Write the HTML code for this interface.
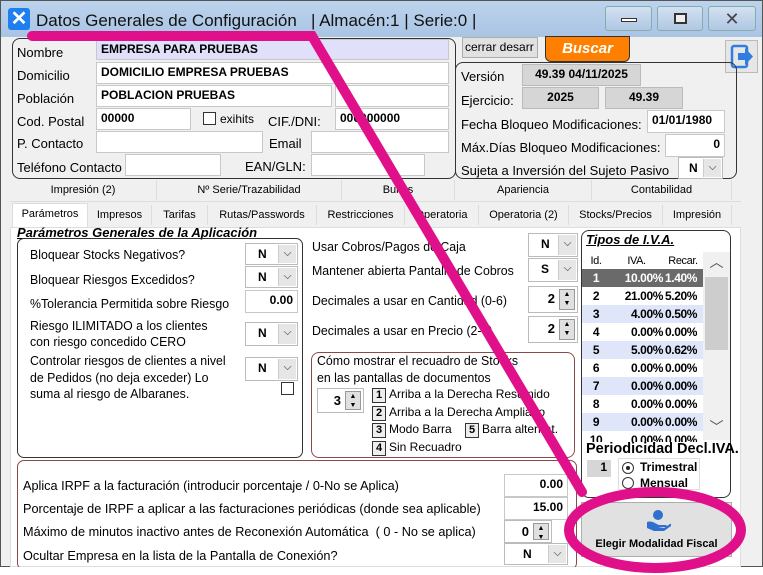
<!DOCTYPE html>
<html><head><meta charset="utf-8"><style>
*{box-sizing:border-box;margin:0;padding:0}
body{width:763px;height:575px;background:#fff;font-family:"Liberation Sans",sans-serif;font-size:13px;color:#000;position:relative;overflow:hidden}
.a{position:absolute;white-space:nowrap}
.n{transform:scaleX(.95);transform-origin:0 0}
.in{position:absolute;background:#fff;border:1px solid #c8c8c8;font-weight:bold;font-size:12px;padding:2px 4px;line-height:15px}
.gb{position:absolute;background:#d6d6d6;border:1px solid #bbb;font-weight:bold;font-size:12px;text-align:center;line-height:18px}
.cb{position:absolute;background:#fff;border:1px solid #bbb;font-weight:bold;font-size:12px}
.cb b{position:absolute;left:12px;top:3px}
.cb i{position:absolute;right:1px;top:1px;bottom:1px;width:18px;background:#e6e6e6;border-left:1px solid #ccc;font-style:normal;color:#777;font-size:10px;text-align:center;line-height:18px}
.sp{position:absolute;background:#fff;border:1px solid #bbb;font-weight:bold;font-size:13px}
.sp b{position:absolute;right:22px;top:4px}
.sp i{position:absolute;right:2px;top:2px;width:16px;bottom:2px;background:#e0e0e0;border:1px solid #999;font-style:normal;font-size:7px;line-height:9px;text-align:center}
.box{position:absolute;border:1px solid #333;border-radius:8px}
.tab{position:absolute;font-size:11px;text-align:center;line-height:20px;border-right:1px solid #ddd}
.nb{display:inline-block;width:14px;height:15px;border:1px solid #333;font-weight:bold;font-size:11px;text-align:center;line-height:13px;background:#eee;margin-right:3px}
td{letter-spacing:-0.4px}
</style></head><body>
<div class="a" style="left:0;top:0;width:763px;height:567px;background:#f0f0f0;border:1px solid #555"></div>
<div class="a" style="left:1px;top:1px;width:761px;height:36px;background:linear-gradient(#bcd3ec,#a9c4e4)"></div>
<div class="a" style="left:8px;top:8px;width:22px;height:22px;background:#1e7ff0;border-radius:3px;color:#fff;font-weight:bold;font-size:20px;text-align:center;line-height:22px">✕</div>
<div class="a" style="left:36px;top:11px;font-size:17px;color:#111">Datos Generales de Configuración &nbsp;&nbsp;| Almacén:1 | Serie:0 |</div>
<div class="a" style="left:605px;top:6px;width:47px;height:25px;background:linear-gradient(#d3e1f2,#b0c7e3);border:1px solid #8aa;border-radius:3px"><div class="a" style="left:15px;top:11px;width:16px;height:4px;background:#fff;border:1px solid #333"></div></div>
<div class="a" style="left:657px;top:6px;width:46px;height:25px;background:linear-gradient(#d3e1f2,#b0c7e3);border:1px solid #8aa;border-radius:3px"><div class="a" style="left:16px;top:6px;width:13px;height:11px;border:2px solid #333;background:#eee"></div></div>
<div class="a" style="left:708px;top:6px;width:48px;height:25px;background:linear-gradient(#d3e1f2,#b0c7e3);border:1px solid #8aa;border-radius:3px;text-align:center;font-size:18px;line-height:24px;color:#444">✕</div>

<div class="box" style="left:12px;top:38px;width:444px;height:141px"></div>
<div class="a" style="left:17px;top:45px">Nombre</div>
<div class="a" style="left:17px;top:68px">Domicilio</div>
<div class="a" style="left:17px;top:91px">Población</div>
<div class="a" style="left:17px;top:114px">Cod. Postal</div>
<div class="a" style="left:17px;top:136px">P. Contacto</div>
<div class="a" style="left:17px;top:160px">Teléfono Contacto</div>
<div class="in" style="left:96px;top:39px;width:353px;height:21px;background:#e0e0fa">EMPRESA PARA PRUEBAS</div>
<div class="in" style="left:96px;top:62px;width:353px;height:22px">DOMICILIO EMPRESA PRUEBAS</div>
<div class="in" style="left:96px;top:85px;width:236px;height:22px">POBLACION PRUEBAS</div>
<div class="in" style="left:335px;top:85px;width:114px;height:22px"></div>
<div class="in" style="left:96px;top:108px;width:95px;height:22px">00000</div>
<div class="a" style="left:203px;top:112px;width:13px;height:13px;border:1px solid #333;background:#fff"></div>
<div class="a" style="left:220px;top:112px;font-size:12px">exihits</div>
<div class="a" style="left:268px;top:114px">CIF./DNI:</div>
<div class="in" style="left:335px;top:108px;width:114px;height:22px">000000000</div>
<div class="in" style="left:96px;top:131px;width:167px;height:22px"></div>
<div class="a" style="left:269px;top:136px">Email</div>
<div class="in" style="left:311px;top:131px;width:138px;height:22px"></div>
<div class="in" style="left:125px;top:154px;width:96px;height:22px"></div>
<div class="a" style="left:245px;top:159px">EAN/GLN:</div>
<div class="in" style="left:311px;top:154px;width:114px;height:22px"></div>

<div class="a" style="left:462px;top:37px;width:76px;height:21px;background:#e1e1e1;border:1px solid #adadad;font-size:12px;padding:2px 2px;overflow:hidden">cerrar desarr</div>
<div class="a" style="left:545px;top:36px;width:85px;height:26px;background:#ff8000;border:1px solid #333;border-radius:0 0 6px 6px;color:#fff;font-weight:bold;font-style:italic;font-size:15px;text-align:center;line-height:24px">Buscar</div>
<div class="a" style="left:725px;top:40px;width:33px;height:33px;background:#e6e6e6;border:1px solid #bbb"><svg width="31" height="31"><rect x="6" y="5" width="15" height="21" rx="2" fill="none" stroke="#2f7de0" stroke-width="2.5"/><path d="M12 12h7v-5l8 8.5-8 8.5v-5h-7z" fill="#2f7de0"/></svg></div>
<div class="box" style="left:455px;top:62px;width:282px;height:117px"></div>
<div class="a" style="left:461px;top:69px">Versión</div>
<div class="gb" style="left:522px;top:64px;width:119px;height:22px">49.39 04/11/2025</div>
<div class="a" style="left:461px;top:93px">Ejercicio:</div>
<div class="gb" style="left:522px;top:87px;width:77px;height:22px">2025</div>
<div class="gb" style="left:605px;top:87px;width:78px;height:22px">49.39</div>
<div class="a" style="left:461px;top:117px">Fecha Bloqueo Modificaciones:</div>
<div class="in" style="left:647px;top:110px;width:78px;height:23px">01/01/1980</div>
<div class="a" style="left:461px;top:140px">Máx.Días Bloqueo Modificaciones:</div>
<div class="in" style="left:665px;top:134px;width:60px;height:23px;text-align:right">0</div>
<div class="a" style="left:461px;top:163px">Sujeta a Inversión del Sujeto Pasivo</div>
<div class="cb" style="left:678px;top:157px;width:45px;height:22px"><b style="left:10px">N</b><i>⌵</i></div>

<div class="a" style="left:10px;top:180px;width:731px;height:22px;background:#f0f0f0;border-bottom:1px solid #ddd"></div>
<div class="tab" style="left:10px;top:180px;width:147px">Impresión (2)</div>
<div class="tab" style="left:157px;top:180px;width:185px">Nº Serie/Trazabilidad</div>
<div class="tab" style="left:342px;top:180px;width:113px">Bultos</div>
<div class="tab" style="left:455px;top:180px;width:137px">Apariencia</div>
<div class="tab" style="left:592px;top:180px;width:140px">Contabilidad</div>
<div class="tab" style="left:12px;top:203px;width:76px;background:#fff;border:1px solid #ddd;border-bottom:none;height:25px">Parámetros</div>
<div class="tab" style="left:88px;top:205px;width:64px">Impresos</div>
<div class="tab" style="left:152px;top:205px;width:56px">Tarifas</div>
<div class="tab" style="left:208px;top:205px;width:109px">Rutas/Passwords</div>
<div class="tab" style="left:317px;top:205px;width:88px">Restricciones</div>
<div class="tab" style="left:405px;top:205px;width:74px">Operatoria</div>
<div class="tab" style="left:479px;top:205px;width:90px">Operatoria (2)</div>
<div class="tab" style="left:569px;top:205px;width:94px">Stocks/Precios</div>
<div class="tab" style="left:663px;top:205px;width:69px">Impresión</div>
<div class="a" style="left:10px;top:227px;width:731px;height:340px;background:#fff;border:1px solid #ddd"></div>
<div class="a" style="left:17px;top:225px;font-weight:bold;font-style:italic;text-decoration:underline;font-size:13px">Parámetros Generales de la Aplicación</div>

<div class="box" style="left:17px;top:238px;width:286px;height:220px;border-radius:7px"></div>
<div class="a n" style="left:30px;top:247px">Bloquear Stocks Negativos?</div>
<div class="cb" style="left:245px;top:243px;width:53px;height:22px"><b>N</b><i>⌵</i></div>
<div class="a n" style="left:30px;top:272px">Bloquear Riesgos Excedidos?</div>
<div class="cb" style="left:245px;top:266px;width:53px;height:22px"><b>N</b><i>⌵</i></div>
<div class="a n" style="left:30px;top:296px">%Tolerancia Permitida sobre Riesgo</div>
<div class="in" style="left:245px;top:290px;width:53px;height:23px;text-align:right">0.00</div>
<div class="a n" style="left:30px;top:318px;line-height:16px">Riesgo ILIMITADO a los clientes<br>con riesgo concedido CERO</div>
<div class="cb" style="left:245px;top:322px;width:53px;height:24px"><b>N</b><i>⌵</i></div>
<div class="a n" style="left:30px;top:353px;line-height:16.5px">Controlar riesgos de clientes a nivel<br>de Pedidos (no deja exceder) Lo<br>suma al riesgo de Albaranes.</div>
<div class="cb" style="left:245px;top:357px;width:53px;height:24px"><b>N</b><i>⌵</i></div>
<div class="a" style="left:281px;top:382px;width:13px;height:13px;border:1px solid #333;background:#fff"></div>

<div class="a n" style="left:312px;top:239px">Usar Cobros/Pagos de Caja</div>
<div class="cb" style="left:528px;top:233px;width:50px;height:24px"><b>N</b><i>⌵</i></div>
<div class="a n" style="left:312px;top:263px">Mantener abierta Pantalla de Cobros</div>
<div class="cb" style="left:528px;top:258px;width:50px;height:24px"><b>S</b><i>⌵</i></div>
<div class="a n" style="left:312px;top:293px">Decimales a usar en Cantidad (0-6)</div>
<div class="sp" style="left:528px;top:286px;width:50px;height:27px"><b>2</b><i>▲<br>▼</i></div>
<div class="a n" style="left:312px;top:323px">Decimales a usar en Precio (2-6)</div>
<div class="sp" style="left:528px;top:316px;width:50px;height:27px"><b>2</b><i>▲<br>▼</i></div>
<div class="box" style="left:311px;top:352px;width:264px;height:106px;border-color:#8a4a4a"></div>
<div class="a n" style="left:317px;top:353px;line-height:16.5px">Cómo mostrar el recuadro de Stocks<br>en las pantallas de documentos</div>
<div class="sp" style="left:317px;top:388px;width:47px;height:25px"><b>3</b><i>▲<br>▼</i></div>
<div class="a" style="left:372px;top:386px;font-size:12px;line-height:17.5px"><span class="nb">1</span>Arriba a la Derecha Resumido<br><span class="nb">2</span>Arriba a la Derecha Ampliado<br><span class="nb">3</span>Modo Barra &nbsp;&nbsp;&nbsp;<span class="nb">5</span>Barra alternat.<br><span class="nb">4</span>Sin Recuadro</div>

<div class="box" style="left:581px;top:230px;width:150px;height:268px"></div>
<div class="a" style="left:586px;top:232px;font-weight:bold;font-style:italic;text-decoration:underline">Tipos de I.V.A.</div>
<div class="a" style="left:582px;top:252px;width:121px;height:190px;background:#fff;overflow:hidden;font-size:12px">
<table style="border-collapse:collapse;font-weight:bold;width:121px;table-layout:fixed">
<tr style="height:17px;font-weight:normal;font-size:11px;background:#fff"><td style="width:28px;text-align:center">Id.</td><td style="width:53px;text-align:center">IVA.</td><td style="text-align:center">Recar.</td></tr>
<tr style="height:18px;background:#6a6a6a;color:#fff"><td style="text-align:center">1</td><td style="text-align:right">10.00%</td><td style="padding-left:2px">1.40%</td></tr>
<tr style="height:18px"><td style="text-align:center">2</td><td style="text-align:right">21.00%</td><td style="padding-left:2px">5.20%</td></tr>
<tr style="height:18px;background:#dfe6fa"><td style="text-align:center">3</td><td style="text-align:right">4.00%</td><td style="padding-left:2px">0.50%</td></tr>
<tr style="height:18px"><td style="text-align:center">4</td><td style="text-align:right">0.00%</td><td style="padding-left:2px">0.00%</td></tr>
<tr style="height:18px;background:#dfe6fa"><td style="text-align:center">5</td><td style="text-align:right">5.00%</td><td style="padding-left:2px">0.62%</td></tr>
<tr style="height:18px"><td style="text-align:center">6</td><td style="text-align:right">0.00%</td><td style="padding-left:2px">0.00%</td></tr>
<tr style="height:18px;background:#dfe6fa"><td style="text-align:center">7</td><td style="text-align:right">0.00%</td><td style="padding-left:2px">0.00%</td></tr>
<tr style="height:18px"><td style="text-align:center">8</td><td style="text-align:right">0.00%</td><td style="padding-left:2px">0.00%</td></tr>
<tr style="height:18px;background:#dfe6fa"><td style="text-align:center">9</td><td style="text-align:right">0.00%</td><td style="padding-left:2px">0.00%</td></tr>
<tr style="height:18px"><td style="text-align:center">10</td><td style="text-align:right">0.00%</td><td style="padding-left:2px">0.00%</td></tr>
</table></div>
<div class="a" style="left:703px;top:252px;width:27px;height:188px;background:#f0f0f0;color:#555;text-align:center;font-size:14px">︿<div class="a" style="left:2px;top:25px;width:23px;height:73px;background:#cdcdcd"></div><div class="a" style="left:0;top:165px;width:27px">﹀</div></div>
<div class="a" style="left:586px;top:441px;font-weight:bold;font-size:14.5px">Periodicidad Decl.IVA.</div>
<div class="gb" style="left:587px;top:460px;width:24px;height:17px;line-height:15px;border:none;text-align:right;padding-right:4px">1</div>
<div class="a" style="left:618px;top:458px;width:82px;height:32px;border:1px solid #ddd"></div>
<div class="a" style="left:622px;top:462px;width:12px;height:12px;border:1px solid #333;border-radius:50%;background:#fff"><div class="a" style="left:3px;top:3px;width:4px;height:4px;background:#222;border-radius:50%"></div></div>
<div class="a" style="left:640px;top:460px;font-weight:bold;font-size:12px">Trimestral</div>
<div class="a" style="left:622px;top:477px;width:12px;height:12px;border:1px solid #333;border-radius:50%;background:#fff"></div>
<div class="a" style="left:640px;top:476px;font-weight:bold;font-size:12px">Mensual</div>

<div class="a" style="left:581px;top:502px;width:151px;height:55px;background:#e1e1e1;border:1px solid #adadad">
<svg class="a" style="left:63px;top:5px" width="26" height="24"><circle cx="13" cy="7" r="5" fill="#2f6fd0"/><path d="M2 14c5-2 9 2 12 3h7c1 0 1 2 0 2h-8l6 1 6-4c1-1 2 1 1 2l-7 5H9l-7-3z" fill="#2f6fd0"/></svg>
<div class="a" style="left:0;width:149px;top:35px;text-align:center;font-weight:bold;font-size:11px">Elegir Modalidad Fiscal</div></div>

<div class="box" style="left:17px;top:460px;width:560px;height:110px;border-color:#8a4a4a;border-radius:7px"></div>
<div class="a" style="left:23px;top:479px;font-size:12.7px">Aplica IRPF a la facturación (introducir porcentaje / 0-No se Aplica)</div>
<div class="in" style="left:504px;top:474px;width:64px;height:23px;text-align:right">0.00</div>
<div class="a" style="left:23px;top:502px;font-size:12.7px">Porcentaje de IRPF a aplicar a las facturaciones periódicas (donde sea aplicable)</div>
<div class="in" style="left:504px;top:497px;width:64px;height:23px;text-align:right">15.00</div>
<div class="a" style="left:23px;top:525px;font-size:12.7px">Máximo de minutos inactivo antes de Reconexión Automática &nbsp;( 0 - No se aplica)</div>
<div class="sp" style="left:504px;top:520px;width:48px;height:23px"><b style="top:3px">0</b><i>▲<br>▼</i></div>
<div class="a" style="left:23px;top:549px;font-size:12.7px">Ocultar Empresa en la lista de la Pantalla de Conexión?</div>
<div class="cb" style="left:504px;top:543px;width:64px;height:22px"><b style="left:18px">N</b><i>⌵</i></div>
<div class="a" style="left:0;top:567px;width:763px;height:8px;background:#fff"></div>

<svg class="a" style="left:0;top:0" width="763" height="575"><g fill="none" stroke="#e0108a" stroke-width="10" stroke-linecap="round"><path d="M32 36H312L582 492"/><ellipse cx="655" cy="530" rx="86" ry="38"/></g></svg>
</body></html>
